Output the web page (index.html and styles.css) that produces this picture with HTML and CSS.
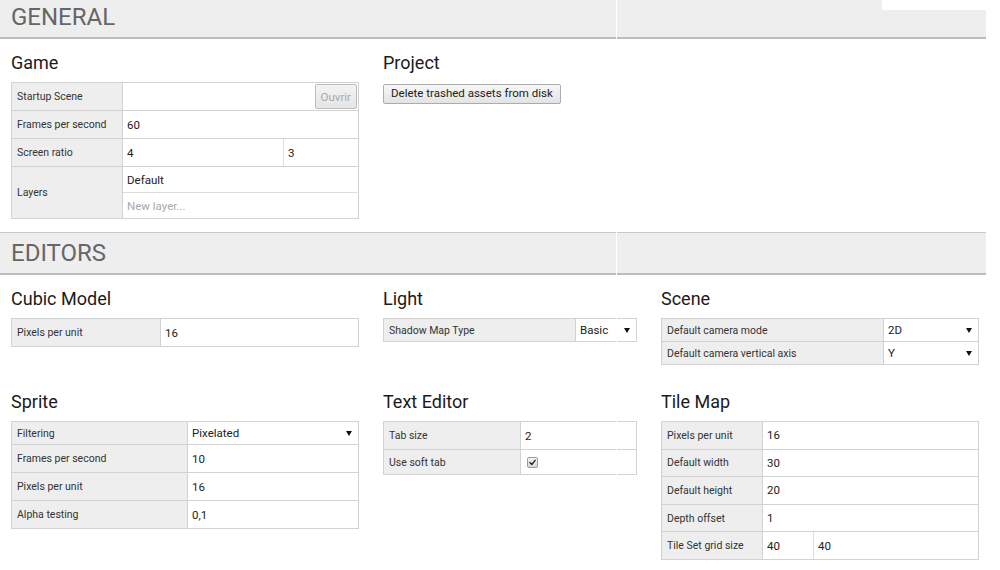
FILE: index.html
```html
<!DOCTYPE html>
<html lang="en">
<head>
<meta charset="utf-8">
<title>Settings</title>
<link rel="stylesheet" href="styles.css">
</head>
<body>
<div class="page">
  <h1 class="section-title">GENERAL</h1>
  <div class="grid">
    <section class="panel">
      <h2>Game</h2>
      <table class="props t-game">
        <tr>
          <th>Startup Scene</th>
          <td><div class="field-row"><input class="val" value=""><button class="btn btn-open" disabled>Ouvrir</button></div></td>
        </tr>
        <tr><th>Frames per second</th><td><input class="val" value="60"></td></tr>
        <tr>
          <th>Screen ratio</th>
          <td><div class="field-row"><input class="val ratio-a" value="4"><input class="val ratio-b split" value="3"></div></td>
        </tr>
        <tr class="tall">
          <th>Layers</th>
          <td class="layers"><div class="layer">Default</div><input class="val new-layer" placeholder="New layer..."></td>
        </tr>
      </table>
    </section>
    <section class="panel">
      <h2>Project</h2>
      <button class="btn btn-action">Delete trashed assets from disk</button>
    </section>
  </div>

  <h1 class="section-title">EDITORS</h1>
  <div class="grid">
    <section class="panel">
      <h2>Cubic Model</h2>
      <table class="props t-cubic">
        <tr><th>Pixels per unit</th><td><input class="val" value="16"></td></tr>
      </table>
    </section>
    <section class="panel">
      <h2>Light</h2>
      <table class="props t-light">
        <tr class="short"><th>Shadow Map Type</th><td><div class="select"><span>Basic</span><i class="caret"></i></div></td></tr>
      </table>
    </section>
    <section class="panel">
      <h2>Scene</h2>
      <table class="props t-scene">
        <tr class="short"><th>Default camera mode</th><td><div class="select"><span>2D</span><i class="caret"></i></div></td></tr>
        <tr class="short"><th>Default camera vertical axis</th><td><div class="select"><span>Y</span><i class="caret"></i></div></td></tr>
      </table>
    </section>

    <section class="panel">
      <h2>Sprite</h2>
      <table class="props t-sprite">
        <tr class="short"><th>Filtering</th><td><div class="select"><span>Pixelated</span><i class="caret"></i></div></td></tr>
        <tr><th>Frames per second</th><td><input class="val" value="10"></td></tr>
        <tr><th>Pixels per unit</th><td><input class="val" value="16"></td></tr>
        <tr><th>Alpha testing</th><td><input class="val" value="0,1"></td></tr>
      </table>
    </section>
    <section class="panel">
      <h2>Text Editor</h2>
      <table class="props t-text">
        <tr><th>Tab size</th><td><input class="val" value="2"></td></tr>
        <tr class="check-row"><th>Use soft tab</th><td><span class="checkbox"><svg viewBox="0 0 10 10" width="10" height="10"><path d="M2.2 5.1 L4.2 7.2 L7.9 2.6" fill="none" stroke="#2a2a2a" stroke-width="1.6" stroke-linecap="round" stroke-linejoin="round"/></svg></span></td></tr>
      </table>
    </section>
    <section class="panel">
      <h2>Tile Map</h2>
      <table class="props t-tile">
        <tr><th>Pixels per unit</th><td><input class="val" value="16"></td></tr>
        <tr><th>Default width</th><td><input class="val" value="30"></td></tr>
        <tr><th>Default height</th><td><input class="val" value="20"></td></tr>
        <tr><th>Depth offset</th><td><input class="val" value="1"></td></tr>
        <tr>
          <th>Tile Set grid size</th>
          <td><div class="field-row"><input class="val grid-a" value="40"><input class="val grid-b split" value="40"></div></td>
        </tr>
      </table>
    </section>
  </div>

  <div class="notch"></div>
  <div class="seam"></div>
</div>
</body>
</html>
```

FILE: styles.css
```css
* { box-sizing: border-box; }

html, body {
  margin: 0;
  padding: 0;
  background: #fff;
}

body {
  font-family: Roboto, "Liberation Sans", sans-serif;
  color: #222;
  overflow: hidden;
}

.page {
  position: relative;
  width: 986px;
  margin-top: -4px;
}

.section-title {
  margin: 0;
  height: 43px;
  padding-left: 11px;
  background: #eee;
  border-top: 1px solid #c8c8c8;
  border-bottom: 2px solid #bcbcbc;
  font-size: 24px;
  font-weight: 400;
  line-height: 41px;
  color: #666;
}

.grid {
  display: grid;
  grid-template-columns: 348px 254px 318px;
  column-gap: 24px;
  row-gap: 26px;
  padding: 13px 0 13px 11px;
  align-items: start;
}

.panel h2 {
  margin: 0 0 9px;
  font-size: 18px;
  font-weight: 400;
  line-height: 21px;
  color: #1b1b1b;
}

/* property tables */
.props {
  width: 100%;
  border-collapse: collapse;
  table-layout: fixed;
  font-size: 11.5px;
}

.props th,
.props td {
  border: 1px solid #d2d2d2;
  height: 28px;
  padding: 0;
  vertical-align: middle;
}

.props th {
  background: #eee;
  font-weight: 400;
  text-align: left;
  font-size: 10.5px;
  color: #333;
  padding: 0 4px 0 5px;
  white-space: nowrap;
}

.props tr.short th,
.props tr.short td { height: 23px; }

.props tr.check-row th,
.props tr.check-row td { height: 25px; }

.props tr.tall th,
.props tr.tall td { height: 52px; }

.t-tile th,
.t-tile td { height: 27.6px; }

.t-game th { width: 111px; }
.t-cubic th { width: 149px; }
.t-light th { width: 192px; }
.t-scene th { width: 222px; }
.t-sprite th { width: 176px; }
.t-text th { width: 137px; }
.t-tile th { width: 101px; }

.val {
  display: block;
  width: 100%;
  height: 100%;
  min-height: 24px;
  border: 0;
  margin: 0;
  padding: 0 4px;
  background: transparent;
  font-family: inherit;
  font-size: 11.5px;
  color: #222;
  outline: none;
}

.val::placeholder { color: #a9a9a9; }

.field-row {
  display: flex;
  align-items: center;
  height: 100%;
}

.field-row .val { flex: 1 1 auto; min-width: 0; }

.split { border-left: 1px solid #dedede; }

.ratio-a { flex: 0 0 160px !important; }
.grid-a { flex: 0 0 50px !important; }

.layers { padding: 0; }

.layer {
  height: 26px;
  line-height: 26px;
  padding: 0 4px;
  margin-right: 1px;
  border-bottom: 1px solid #dcdcdc;
  font-size: 11.5px;
  color: #222;
}

.new-layer { height: 25px; min-height: 24px; }

/* buttons */
.btn {
  font-family: inherit;
  font-size: 11.5px;
  color: #222;
  background: linear-gradient(#f7f7f7, #e3e3e3);
  border: 1px solid #acacac;
  border-radius: 2px;
  margin: 0;
  cursor: default;
}

.btn-action {
  height: 20px;
  padding: 0 7px;
  line-height: 17px;
}

.btn-open {
  flex: 0 0 auto;
  height: 25px;
  padding: 0 5px;
  margin-right: 1px;
  color: #a8a8a8;
  background: linear-gradient(#f3f3f3, #e6e6e6);
  border-color: #bdbdbd;
}

/* fake select */
.select {
  display: flex;
  align-items: center;
  justify-content: space-between;
  height: 100%;
  padding: 0 6px 0 4px;
  font-size: 11.5px;
  color: #222;
}

.caret {
  width: 0;
  height: 0;
  border-left: 3px solid transparent;
  border-right: 3px solid transparent;
  border-top: 5px solid #111;
}

/* checkbox */
.checkbox {
  display: block;
  width: 11px;
  height: 11px;
  margin-left: 6px;
  border: 1px solid #9c9c9c;
  border-radius: 2px;
  background: linear-gradient(#f2f2f2, #d9d9d9);
  position: relative;
}

.checkbox svg {
  position: absolute;
  left: 0;
  top: 0;
  width: 9px;
  height: 9px;
}

/* screen artefacts overlaying the page */
.notch {
  position: absolute;
  left: 882px;
  top: 0;
  width: 104px;
  height: 14px;
  background: #fff;
}

.seam {
  position: absolute;
  left: 616px;
  top: 0;
  bottom: 0;
  width: 1px;
  background: #fff;
}
```
